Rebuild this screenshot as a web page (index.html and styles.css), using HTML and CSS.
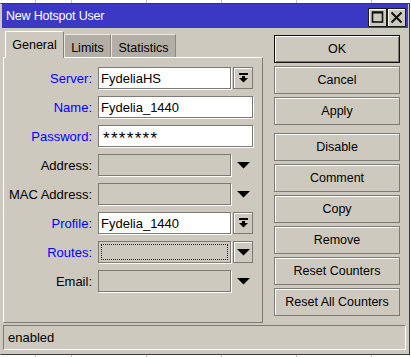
FILE: index.html
```html
<!DOCTYPE html>
<html lang="en">

<head>
    <meta charset="UTF-8">
    <title>New Hotspot User</title>
    <link rel="stylesheet" href="styles.css">
</head>

<body>
    <div class="window">
        <div class="titlebar">
            <span class="title">New Hotspot User</span>
            <div class="title-buttons">
                <span class="tbtn">
                    <svg width="17" height="17" viewBox="0 0 17 17"><rect x="3.5" y="3" width="10" height="10" fill="none" stroke="#111" stroke-width="1.6"/><line x1="3" y1="3.8" x2="14" y2="3.8" stroke="#111" stroke-width="1.5"/></svg>
                </span>
                <span class="tbtn">
                    <svg width="17" height="17" viewBox="0 0 17 17"><path d="M3.5 3.5 L13.5 13.5 M13.5 3.5 L3.5 13.5" stroke="#111" stroke-width="2"/></svg>
                </span>
            </div>
        </div>

        <div class="content">
            <div class="left">
                <div class="tabs">
                    <div class="tab tab-active">General</div>
                    <div class="tab">Limits</div>
                    <div class="tab">Statistics</div>
                </div>
                <div class="panel">
                    <div class="form">
                        <label class="lbl lbl-blue">Server:</label>
                        <div class="field">
                            <div class="input input-short">FydeliaHS</div>
                            <span class="dd-btn">
                                <svg width="9" height="10" viewBox="0 0 9 10"><rect x="0" y="0" width="9" height="2" fill="#000"/><rect x="3" y="3" width="3" height="3" fill="#000"/><path d="M0 5 L9 5 L4.5 9.5 Z" fill="#000"/></svg>
                            </span>
                        </div>

                        <label class="lbl lbl-blue">Name:</label>
                        <div class="field">
                            <div class="input">Fydelia_1440</div>
                        </div>

                        <label class="lbl lbl-blue">Password:</label>
                        <div class="field">
                            <div class="input input-pass">*******</div>
                        </div>

                        <label class="lbl">Address:</label>
                        <div class="field">
                            <div class="input input-short input-off"></div>
                            <span class="dd-flat">
                                <svg width="13" height="7" viewBox="0 0 13 7"><path d="M0 0 L13 0 L6.5 6.5 Z" fill="#000"/></svg>
                            </span>
                        </div>

                        <label class="lbl">MAC Address:</label>
                        <div class="field">
                            <div class="input input-short input-off"></div>
                            <span class="dd-flat">
                                <svg width="13" height="7" viewBox="0 0 13 7"><path d="M0 0 L13 0 L6.5 6.5 Z" fill="#000"/></svg>
                            </span>
                        </div>

                        <label class="lbl lbl-blue">Profile:</label>
                        <div class="field">
                            <div class="input input-short">Fydelia_1440</div>
                            <span class="dd-btn">
                                <svg width="9" height="10" viewBox="0 0 9 10"><rect x="0" y="0" width="9" height="2" fill="#000"/><rect x="3" y="3" width="3" height="3" fill="#000"/><path d="M0 5 L9 5 L4.5 9.5 Z" fill="#000"/></svg>
                            </span>
                        </div>

                        <label class="lbl lbl-blue">Routes:</label>
                        <div class="field">
                            <div class="input input-short input-off input-focus"><span class="focus-rect"></span></div>
                            <span class="dd-btn">
                                <svg width="13" height="7" viewBox="0 0 13 7"><path d="M0 0 L13 0 L6.5 6.5 Z" fill="#000"/></svg>
                            </span>
                        </div>

                        <label class="lbl">Email:</label>
                        <div class="field">
                            <div class="input input-short input-off"></div>
                            <span class="dd-flat">
                                <svg width="13" height="7" viewBox="0 0 13 7"><path d="M0 0 L13 0 L6.5 6.5 Z" fill="#000"/></svg>
                            </span>
                        </div>
                    </div>
                </div>
            </div>

            <div class="buttons">
                <button class="btn btn-default">OK</button>
                <button class="btn">Cancel</button>
                <button class="btn">Apply</button>
                <button class="btn btn-sep">Disable</button>
                <button class="btn">Comment</button>
                <button class="btn">Copy</button>
                <button class="btn">Remove</button>
                <button class="btn">Reset Counters</button>
                <button class="btn">Reset All Counters</button>
            </div>
        </div>

        <div class="statusbar">enabled</div>
    </div>
</body>

</html>
```

FILE: styles.css
```css
body {
    margin: 0;
    background-color: #fff;
    background-image: repeating-linear-gradient(to right, #c4c4c4 0, #c4c4c4 1px, transparent 1px, transparent 75px);
    background-position: 71px 0;
    font-family: 'Liberation Sans', Arial, sans-serif;
    font-size: 13px;
    color: #000;
}

.window {
    margin-top: 3px;
    width: 410px;
    height: 352px;
    box-sizing: border-box;
    background-color: #cdc9bf;
    border: 1px solid #3a3a3a;
    border-left-color: #cdc9bf;
    padding: 0 1px 1px 1px;
    display: flex;
    flex-direction: column;
}

/* title bar */
.titlebar {
    height: 24px;
    background-color: #3b39c4;
    display: flex;
    align-items: center;
    justify-content: space-between;
    padding: 0 2px 0 4px;
    flex-shrink: 0;
}

.title {
    color: #fff;
    font-size: 12.5px;
    letter-spacing: -0.2px;
}

.title-buttons {
    display: flex;
    align-self: flex-end;
    margin-bottom: 1px;
}

.tbtn {
    width: 19px;
    height: 19px;
    box-sizing: border-box;
    background-color: #cdc9bf;
    border: 1px solid #1c1c1c;
    box-shadow: inset 1px 1px 0 #fff;
    display: flex;
    align-items: center;
    justify-content: center;
}

/* main area */
.content {
    display: flex;
    padding: 3px 0 0 1px;
    height: 295px;
    box-sizing: border-box;
    flex-shrink: 0;
}

.left {
    width: 260px;
}

.tabs {
    display: flex;
    align-items: flex-end;
    height: 26px;
    padding-left: 2px;
    font-size: 12.5px;
}

.tab {
    box-sizing: border-box;
    height: 23px;
    background-color: #b3afa7;
    border: 1px solid #e9e6e0;
    border-right-color: #8a877f;
    border-bottom: none;
    display: flex;
    align-items: center;
    justify-content: center;
    padding-top: 3px;
}

.tab:nth-child(2) {
    width: 47px;
}

.tab:nth-child(3) {
    width: 65px;
}

.tab-active {
    width: 59px;
    height: 27px;
    margin-bottom: -1px;
    background-color: #cdc9bf;
    border-color: #fff;
    border-right-color: #808080;
    position: relative;
    z-index: 1;
    padding-top: 0;
}

.panel {
    height: 266px;
    box-sizing: border-box;
    border: 1px solid #fff;
    border-right-color: #7c7a74;
    border-bottom-color: #7c7a74;
    padding-top: 9px;
}

.form {
    display: grid;
    grid-template-columns: 88px 155px;
    grid-auto-rows: 22px;
    column-gap: 6px;
    row-gap: 7px;
}

.lbl {
    text-align: right;
    align-self: center;
    white-space: nowrap;
}

.lbl-blue {
    color: #0000ff;
}

.field {
    display: flex;
    align-items: center;
    gap: 2px;
}

.input {
    box-sizing: border-box;
    width: 155px;
    height: 22px;
    background-color: #fff;
    border: 1px solid #7c7a74;
    box-shadow: 1px 1px 0 #fff;
    padding: 0 2px;
    display: flex;
    align-items: center;
    white-space: nowrap;
    position: relative;
}

.input-short {
    width: 133px;
}

.input-off {
    background-color: #cdc9bf;
}

.input-pass {
    font-size: 17px;
    letter-spacing: 1.3px;
    padding-left: 4px;
    padding-top: 5px;
}

.focus-rect {
    position: absolute;
    top: 2px;
    left: 2px;
    right: 2px;
    bottom: 2px;
    border: 1px dotted #222;
}

.dd-btn {
    box-sizing: border-box;
    width: 20px;
    height: 22px;
    border: 1px solid #7c7a74;
    box-shadow: inset 1px 1px 0 #fff;
    display: flex;
    align-items: center;
    justify-content: center;
}

.dd-flat {
    width: 20px;
    height: 22px;
    display: flex;
    align-items: center;
    justify-content: center;
}

/* right column buttons */
.buttons {
    width: 126px;
    margin-left: 11px;
    margin-top: 4px;
    display: flex;
    flex-direction: column;
    gap: 3px;
}

.btn {
    box-sizing: border-box;
    height: 28px;
    width: 126px;
    background-color: #cdc9bf;
    border: 1px solid #7c7a74;
    box-shadow: inset 1px 1px 0 #fff;
    font-family: 'Liberation Sans', Arial, sans-serif;
    font-size: 12.5px;
    color: #000;
    padding: 0;
    margin: 0;
}

.btn-default {
    border-color: #111;
    box-shadow: inset 1px 1px 0 #fff, inset -1px -1px 0 #7c7a74;
}

.btn-sep {
    margin-top: 5px;
}

/* status bar */
.statusbar {
    margin: 2px 2px 0 1px;
    height: 25px;
    box-sizing: border-box;
    border: 1px solid #7c7a74;
    border-right-color: #fff;
    border-bottom-color: #fff;
    padding-left: 4px;
    display: flex;
    align-items: center;
}
```
